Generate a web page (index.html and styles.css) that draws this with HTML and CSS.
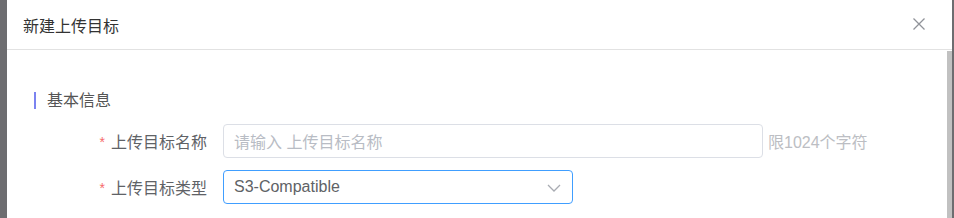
FILE: index.html
```html
<!DOCTYPE html>
<html lang="zh">
<head>
<meta charset="utf-8">
<title>新建上传目标</title>
<link rel="stylesheet" href="styles.css">
</head>
<body>
<div class="dialog">
  <div class="dialog-header">
    <span class="dialog-title">新建上传目标</span>
    <span class="dialog-close" aria-label="关闭">
      <svg width="14" height="14" viewBox="0 0 14 14"><path d="M1.5 1.5 L12.5 12.5 M12.5 1.5 L1.5 12.5" stroke="#909399" stroke-width="1.3" fill="none"/></svg>
    </span>
  </div>
  <div class="dialog-body">
    <div class="content">
      <div class="section-title">基本信息</div>
      <div class="form-row">
        <label class="form-label"><span class="req">*</span>上传目标名称</label>
        <div class="input"><span class="placeholder">请输入 上传目标名称</span></div>
        <span class="hint">限1024个字符</span>
      </div>
      <div class="form-row">
        <label class="form-label"><span class="req">*</span>上传目标类型</label>
        <div class="select">
          <span class="value">S3-Compatible</span>
          <svg class="chevron" width="14" height="8" viewBox="0 0 14 8"><path d="M1 1 L7 7 L13 1" stroke="#a8abb2" stroke-width="1.3" fill="none"/></svg>
        </div>
      </div>
    </div>
    <div class="scrollbar"><div class="thumb"></div></div>
  </div>
</div>
</body>
</html>
```
FILE: styles.css
```css
html, body {
  margin: 0;
  padding: 0;
}
body {
  background: #6d6d70;
  width: 954px;
  height: 218px;
  overflow: hidden;
  font-family: "Liberation Sans", "Noto Sans CJK SC", sans-serif;
}
.dialog {
  margin-left: 7px;
  width: 945px;
  height: 218px;
  background: #fff;
  display: flex;
  flex-direction: column;
}
.dialog-header {
  height: 49px;
  border-bottom: 1px solid #e2e2e2;
  display: flex;
  align-items: center;
  justify-content: space-between;
  padding: 0 26px 0 16px;
  flex-shrink: 0;
}
.dialog-title {
  font-size: 16px;
  color: #333;
}
.dialog-close {
  display: flex;
  width: 14px;
  height: 14px;
  margin-top: -2px;
}
.dialog-body {
  flex: 1;
  display: flex;
  min-height: 0;
}
.content {
  flex: 1;
  padding-top: 42px;
}
.scrollbar {
  width: 5px;
  padding-top: 1px;
  background: #fff;
}
.thumb {
  background: #c1c1c1;
  height: 100%;
}
.section-title {
  margin-left: 27px;
  border-left: 2px solid #7b83f0;
  padding-left: 11px;
  height: 17px;
  line-height: 17px;
  font-size: 16px;
  color: #555;
  margin-bottom: 15px;
}
.form-row {
  display: flex;
  align-items: center;
  height: 34px;
  margin-bottom: 12px;
}
.form-label {
  width: 200px;
  padding-right: 16px;
  text-align: right;
  font-size: 16px;
  color: #606266;
}
.req {
  color: #f56c6c;
  margin-right: 6px;
  font-size: 14px;
  position: relative;
  top: -1px;
}
.input, .select {
  box-sizing: border-box;
  height: 34px;
  border: 1px solid #dcdfe6;
  border-radius: 4px;
  padding: 0 10px;
  display: flex;
  align-items: center;
  font-size: 16px;
}
.input {
  width: 540px;
}
.placeholder {
  color: #b8bcc4;
}
.hint {
  margin-left: 5px;
  font-size: 16px;
  color: #bcbec3;
}
.select {
  width: 350px;
  border-color: #409eff;
  justify-content: space-between;
  padding-right: 11px;
}
.value {
  color: #606266;
}
.chevron {
  margin-top: 1px;
}
```
